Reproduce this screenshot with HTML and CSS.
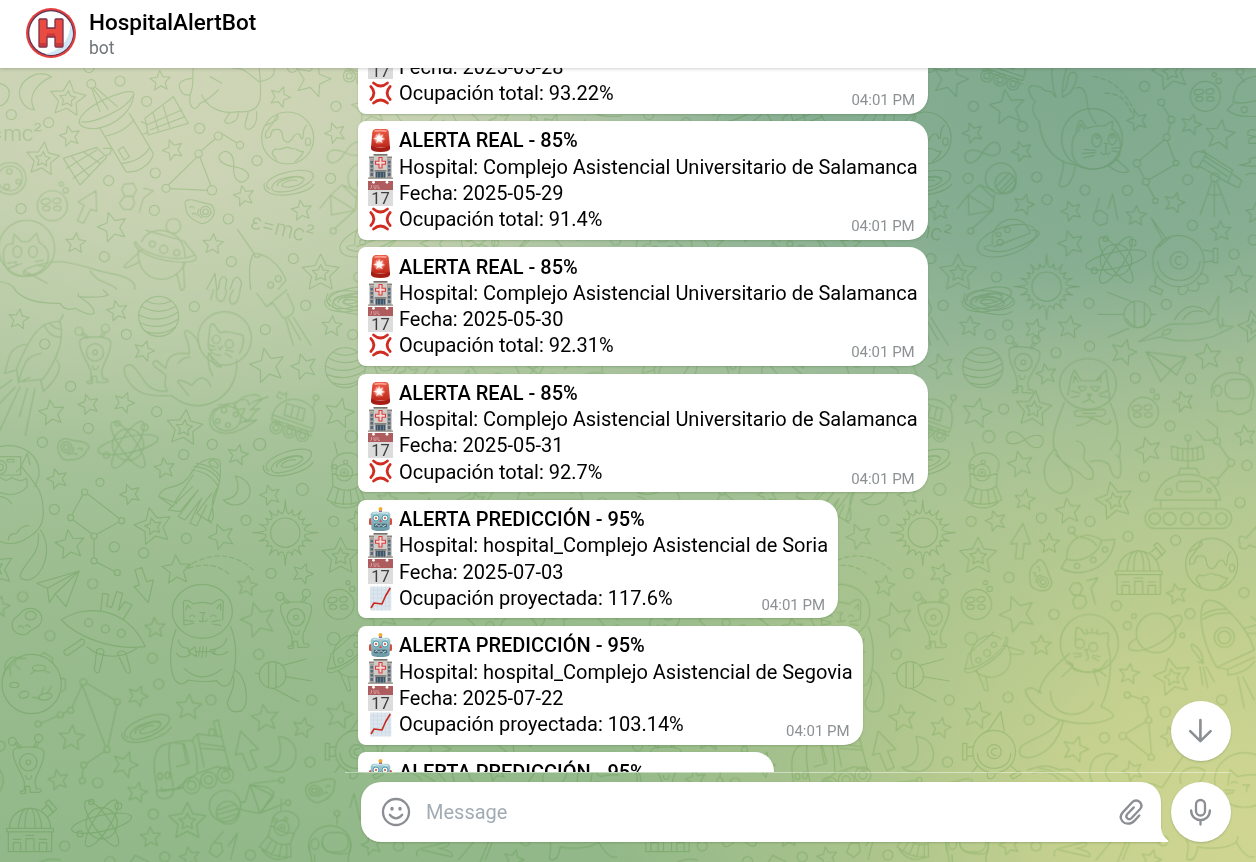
FILE: index.html
```html
<!DOCTYPE html>
<html lang="es">
<head>
<meta charset="utf-8">
<title>HospitalAlertBot</title>
<link rel="stylesheet" href="styles.css">
</head>
<body>
<svg class="defs" width="0" height="0" aria-hidden="true">
  <defs>
    <linearGradient id="redG" x1="0" y1="0" x2="0" y2="1"><stop offset="0" stop-color="#ec5a45"/><stop offset="1" stop-color="#bd281c"/></linearGradient>
    <radialGradient id="glow"><stop offset="0" stop-color="#fff"/><stop offset=".5" stop-color="#ffc9bd" stop-opacity=".8"/><stop offset="1" stop-color="#f0604a" stop-opacity="0"/></radialGradient>
    <linearGradient id="botG" x1="0" y1="0" x2="0" y2="1"><stop offset="0" stop-color="#a9cfd6"/><stop offset="1" stop-color="#6897a3"/></linearGradient>
    <symbol id="siren" viewBox="0 0 25 25">
      <path d="M3 19.500L4.300 4Q4.700 1.300 7.500 1H18Q20.300 1.100 20.700 3.500L22 19.500Z" fill="url(#redG)"/>
      <path d="M3 18Q12.500 21.500 22 18V21Q21 24 12.500 24T3 21Z" fill="#a51d15"/>
      <path d="M6 2.500Q12 1 19 2.500L18 4Q12 3 7 4Z" fill="#f9a08e"/>
      <circle cx="11" cy="10.500" r="6.500" fill="url(#glow)"/>
      <path d="M11 4L12 8.500L15.500 6L13.500 9.800L17.500 11L13 12L15 15.500L11 13L8 15.500L9.300 11.800L5 10.500L9.300 9.200L8 6L10.300 8.500Z" fill="#fff" opacity=".85"/>
    </symbol>
    <symbol id="hospital" viewBox="0 0 25 25">
      <path d="M1 2.500H24V4.500H1Z" fill="#8a857f"/><path d="M1.500 4.500H7V24H1.500ZM18 4.500H23.500V24H18Z" fill="#a5a19c"/>
      <path d="M6 1H19V24H6Z" fill="#cfccc8"/><path d="M5.500 0H19.500V1.600H5.500Z" fill="#77736d"/>
      <path d="M2.500 7H5V9.500H2.500ZM2.500 11H5V13.500H2.500ZM2.500 15H5V17.500H2.500ZM2.500 19H5V22H2.500ZM20 7H22.500V9.500H20ZM20 11H22.500V13.500H20ZM20 15H22.500V17.500H20ZM20 19H22.500V22H20Z" fill="#536b80"/>
      <path d="M7.500 17.500H17.500V24H7.500Z" fill="#3f5668"/><path d="M12.500 18.500V24M9.500 18.500V24M15.500 18.500V24" stroke="#8799a6" stroke-width=".6"/>
      <path d="M6.500 16H18.500V17.600H6.500Z" fill="#86817a"/>
      <path d="M11 3.500H14V7.200H17.500V10.200H14V14H11V10.200H7.500V7.200H11Z" fill="#f1dcd9" stroke="#db3d3c" stroke-width="1.100"/>
      <path d="M0 23.500H25V24.800H0Z" fill="#918e89"/>
    </symbol>
    <symbol id="calendar" viewBox="0 0 25 25">
      <path d="M0 0H25V25H0Z" fill="#dcdcdd"/><path d="M0 0H25V9H0Z" fill="#ae5c5d"/>
      <path d="M3.500 4V7Q2.500 8 1.800 7M6 4V7.300H8V4M10 4V7.300H12" stroke="#dca9a9" fill="none" stroke-width=".8"/>
      <circle cx="5.500" cy="1.300" r="1.400" fill="#fff"/><circle cx="19" cy="1.300" r="1.400" fill="#fff"/>
      <text x="12.500" y="22.700" text-anchor="middle" class="cal-day">17</text>
    </symbol>
    <symbol id="anger" viewBox="0 0 25 25">
      <path d="M5.500 2Q12.500 8 19.500 2M5.500 22Q12.500 16 19.500 22M2.800 5.500Q9 12 2.800 18.500M22.200 5.500Q16 12 22.200 18.500" fill="none" stroke="#d02c21" stroke-width="2.700" stroke-linecap="round"/>
    </symbol>
    <symbol id="robot" viewBox="0 0 25 25">
      <path d="M11 3H14V6H11Z" fill="#7853a0"/><circle cx="12.500" cy="2" r="2" fill="#f3ad34"/>
      <rect x="1" y="11" width="4" height="7" rx="1.500" fill="#d84d3d"/><rect x="20" y="11" width="4" height="7" rx="1.500" fill="#d84d3d"/>
      <path d="M2.600 8Q3 5 6 4.800H19Q22 5 22.400 8L21.500 22Q20 24 12.500 24T3.500 22Z" fill="url(#botG)"/>
      <path d="M5 6.500Q12 4.500 20 6.500" stroke="#d7edf0" fill="none"/>
      <circle cx="8" cy="11" r="3" fill="#f5f5ec" stroke="#4a9eb4" stroke-width="1"/><circle cx="17" cy="11" r="3" fill="#f5f5ec" stroke="#4a9eb4" stroke-width="1"/>
      <circle cx="8" cy="11" r="1" fill="#c14b40"/><circle cx="17" cy="11" r="1" fill="#c14b40"/>
      <path d="M12.500 12L14 15H11Z" fill="#d7524b"/>
      <rect x="6" y="16.800" width="13" height="3.400" rx="1.200" fill="#406574"/><path d="M7 18.500L9 17.500L11 19.500L13 17.500L15 19.500L18 18" fill="none" stroke="#e8f1f1" stroke-width=".9"/>
    </symbol>
    <symbol id="chart" viewBox="0 0 25 25">
      <path d="M2 .5H23.300V24.500H2Z" fill="#dde6ee"/>
      <path d="M5.500 .5V24.500M9.500 .5V24.500M13.500 .5V24.500M17.500 .5V24.500M21 .5V24.500M2 4H23M2 8H23M2 12H23M2 16H23M2 20H23" stroke="#cbd7e2" stroke-width=".6"/>
      <path d="M3 22L6 17L14 18L17.500 10L22.300 2" fill="none" stroke="#c9291f" stroke-width="1.600" stroke-linejoin="round"/>
    </symbol>

    <g id="alien"><path d="M-46-30C-48-45-20-46 0-46C25-46 46-42 47-30C48 10 22 30 20 60L24 80H36Q44 90 30 90H6L4 72H-8L-8 92Q-24 98-24 88L-12 84L-12 60C-14 40-48 0-46-30ZM-25-42L-40-55M-19-45L-36-60M15-45L24-62M22-45L32-60M-8 40Q-6 54 4 51Q10 48 10 40"/><circle r="26"/><circle r="7"/><circle cx="-48" cy="-63" r="12"/><circle cx="31" cy="-72" r="12"/></g>
    <g id="ball"><circle r="60"/><path d="M-52-30Q0 0 52-30M-60-5Q0 25 58-12M-56 20Q5 45 60 8M-40 45Q10 62 50 32M-38-46Q0-28 38-46"/></g>
    <g id="moon"><circle r="45"/><ellipse cx="-17" cy="-16" rx="14" ry="8" transform="rotate(-10)"/><ellipse cx="16" cy="-12" rx="12" ry="8" transform="rotate(-10)"/><ellipse cx="-18" cy="8" rx="11" ry="7"/><ellipse cx="15" cy="8" rx="11" ry="7"/><circle cx="40" cy="-46" r="8"/><circle cx="27" cy="-65" r="6"/></g>
    <g id="galaxy"><path d="M-60 20C-100-10 20-52 65-32C95-12 20 34-40 27C-62 22-55 0-20-12C20-24 55-20 42-4C25 14-18 18-22 8C-20-2 10-12 22-6M-75 2C-82 30-45 42 0 36C40 30 65 18 74 5M-35 10C-45-4 25-26 40-12"/></g>
    <g id="atom"><circle r="47"/><ellipse rx="92" ry="24" transform="rotate(-12)"/><ellipse rx="82" ry="24" transform="rotate(55)"/><ellipse rx="82" ry="24" transform="rotate(-57)"/><circle cx="-31" cy="-64" r="8"/><circle cx="50" cy="-52" r="10"/><circle cx="-65" cy="32" r="9"/></g>
    <g id="earth"><circle r="78"/><path d="M-66-38C-40-50-20-55-32-70M-32-70C-50-20-70-30-66 0C-40 0-58-20-40-25C-10-30-20-10-12 5C0 22 12 8 18-5C30-20 38-10 40 0C52 12 40-30 58-38M-34 68C-35 50-60 50-36 32C-18 42-10 18 12 32C30 28 30 45 48 40C38 65 30 60 22 72"/><ellipse cx="61" cy="11" rx="8" ry="11"/></g>
    <g id="infinity"><path d="M0 0C-30-34-55-20-55 0S-30 22 0 0S55-22 55 0S30 34 0 0Z"/></g>
    <g id="dome"><path d="M-70 5H70V16H-70ZM-65 16V75H65V16M-62 5C-58-75 58-75 62 5M-35 5C-30-50-15-56 0-56C15-56 30-50 35 5M-15 5C-15-40-8-54 0-56C8-54 15-40 15 5M-50 75V48H-28V75M-12 75V36H12V75M28 75V48H50V75M-12 26H12M-50 38H-28M28 38H50M35-50L52-65L70-44L52-28M46-72L56-80L80-54L70-42Z"/></g>
    <g id="pod"><path d="M-40-15C-60-90 75-90 42-15M-38 28L-40-10Q0 8 42-10L40 28M-38 28C-10 45 20 45 40 28M-38 28L-56 70Q0 95 56 70L40 28M-22 38L-32 80M-4 42L-8 84M14 42L18 84M30 36L42 78M-44 78Q0 110 44 78M-25-68L-34-104"/><circle cy="-12" cx="-4" r="25"/><circle cx="-4" cy="-12" r="11"/><circle cx="-4" cy="-12" r="3"/><circle cx="-33" cy="-30" r="6"/><circle cy="-44" r="6"/></g>
    <g id="saucer"><path d="M-70-35C-50-90 60-80 60 10M-88-35C-105-20-50 18 30 25C80 30 105 22 90 5L60-32M-88-35C-70 5 40 30 90 5M-80-12C-90 85 20 110 60 30M-70-10L-120 35Q-130 45-110 42L-75 25M35 60L48 110Q62 110 58 90L55 28M-58-70C-10-55 35-45 60-35"/><circle cx="25" cy="-82" r="22"/><circle cx="-38" cy="-28" r="9"/><circle cx="-4" cy="-12" r="12"/><circle cx="35" cy="-2" r="9"/></g>
    <g id="blob"><path d="M-40-18C-50-40-20-38 0-30C20-22 40-30 46-5C48 20 20 40 5 35C-20 25-42 10-40-18ZM-28-12Q-20-20-14-10M-20 8Q-14 0-8 10M0-8Q-10 8 8 18"/><circle cx="20" r="16"/><circle cx="20" r="8"/></g>
    <g id="helmet"><path d="M-60 20C-75-70 60-80 66 0C68 25 50 40 60 55Q20 85 0 60Q-20 65-42 60L-44 32M24-58V-82"/><rect x="-20" y="-34" width="78" height="58" rx="25"/><ellipse cx="-42" rx="12" ry="16"/><circle cx="24" cy="-92" r="8"/></g>
    <g id="probe"><circle r="46"/><circle cx="14" cy="14" r="31"/><path d="M-5 38L37-6M-15 25L25-15M5 42L42 5M-20 36L-64 20L-98 50L-96 110L-24 96L-20 50M-98 50L-24 96M-64 20L-20 60M-98 50L-130 90M-25 96L-85 150"/><circle cx="-90" cy="158" r="9"/></g>
    <g id="rover"><path d="M-65 12C-58-45 10-70 58-20C68 0 66 30 55 52L-65 12ZM-65 20L55 62M-60 0L55 40M-20-35L35-18L28 18L-28 0ZM0-29L-8 7M18-24L10 13M-35-48L-50-55L-42-70L-30-60L-20-68L-22-50M58-20L66-42"/><circle cx="68" cy="-52" r="8"/><circle cx="-52" cy="38" r="18"/><circle cx="-52" cy="38" r="9"/><circle cx="-12" cy="50" r="18"/><circle cx="-12" cy="50" r="9"/><circle cx="27" cy="62" r="18"/><circle cx="27" cy="62" r="9"/></g>
    <g id="bird"><circle r="40"/><path d="M-12-38L-12 38M10-38L10 38M-52-5H-40M28-28L100-48M38 5L118 18M2 40L78 80"/></g>
    <g id="pod2"><circle r="64"/><circle r="21"/><path d="M8-10Q-10-10-8 4Q-4 12 5 11M-50 5C-50 65 50 65 50 5M-34-54L-16-66L20-120L30-62M-64-15L-82-12L-82 15L-62 12M-82-25H-94V25H-82ZM-50 42L-66 62M50 42L70 60M-20 62V78Q-2 88 4 66M48 72L76 58L80 68L56 82Z"/></g>

    <g id="tile">
      <g id="p0" transform="scale(.3333)">
        <path d="M155 230C110 205 60 240 58 280C62 310 80 328 103 329C80 290 110 250 155 230ZM0 250Q30 260 28 280Q25 310 0 318"/>
        <text x="-65" y="424" class="formula">ɛ=mc²</text><text x="748" y="684" class="formula" transform="rotate(14 748 684)">ɛ=mc²</text>
        <path d="M238 370C230 325 380 260 402 278C400 330 350 375 290 386Q245 388 238 370ZM244 366C280 370 380 330 400 285M275 264L300 335M286 262L352 320M280 265L325 328M300 385L378 515C410 520 455 495 460 460L388 340M318 408Q370 400 402 360M365 490Q420 485 448 445M355 450L370 440L388 470L373 480ZM190 475L290 442L320 472L240 555ZM435 355L520 290L565 370L445 405ZM310 445L335 445L330 462L318 466M424 365L440 372L442 398L430 402M215 470L268 528M250 455L300 490M200 505L290 450M220 535L310 470M460 340L475 392M490 318L510 385M440 375L545 330M450 390L555 350"/>
        <circle cx="274" cy="252" r="13"/>
        <path d="M580 205C575 240 585 250 570 285Q545 290 538 260Q535 240 575 235M570 285C565 330 590 335 600 310Q625 300 655 270M605 285C630 340 690 340 715 335Q770 340 780 300Q785 270 777 200M665 250Q640 235 630 230M715 335C720 370 670 380 675 360L690 338M770 335C775 390 735 400 735 375L745 335M700 205C740 200 760 240 780 245Q830 235 822 205"/>
        <use href="#earth" x="863" y="414"/>
        <path d="M664 400L709 428M646 416L604 452M590 472L505 555M510 566L622 571M600 472L633 558M647 416L604 452"/><circle cx="655" cy="408" r="12"/><circle cx="720" cy="435" r="11"/><circle cx="596" cy="461" r="11"/><circle cx="498" cy="565" r="12"/><circle cx="636" cy="571" r="14"/>
        <use href="#infinity" transform="translate(701 500) rotate(45)"/><use href="#infinity" transform="translate(1035 458) rotate(-22)"/>
        <use href="#galaxy" x="868" y="548"/><use href="#moon" x="157" y="617"/>
        <path d="M288 572L234 606L252 616L232 662L250 670L272 628L290 634ZM372 552L400 550L410 570L400 588H374L365 570ZM374 588L398 590L404 610L394 628H370L358 610ZM430 564L460 572L430 595L418 636"/>
        <use href="#blob" x="597" y="635"/><ellipse cx="30" cy="535" rx="48" ry="48"/><ellipse cx="30" cy="535" rx="37" ry="37"/><circle cx="28" cy="514" r="8"/><circle cx="55" cy="545" r="7"/><circle cx="20" cy="560" r="8"/>
        <circle cx="80" cy="745" r="84"/><path d="M12 785C5 740 20 730 38 732L42 702L65 725H85L110 700L118 728C160 750 150 800 110 820C60 840 20 825 12 785ZM22 790L50 785M25 805L52 795M105 785L130 780M108 795L132 798M45 790Q55 798 65 790"/><ellipse cx="52" cy="755" rx="13" ry="17"/><ellipse cx="99" cy="755" rx="13" ry="17"/>
        <path d="M72 812C85 800 140 785 180 785C240 790 280 810 330 820C390 830 410 850 404 868M75 815L90 822M72 812Q65 830 90 822L142 850M270 812C290 850 340 850 350 868M0 845Q35 850 45 868"/>
        <use href="#saucer" x="495" y="760"/>
        <path d="M712 688L762 760M752 868C745 810 750 775 762 760C800 760 840 795 858 840L835 868M762 762Q765 780 785 765M620 868L645 820L650 868M655 868L660 840Q670 820 680 840L675 868M690 868L700 840Q715 820 725 850L720 868"/><circle cx="835" cy="836" r="9"/><circle cx="812" cy="855" r="9"/>
        <use href="#probe" x="1090" y="535"/><use href="#rover" x="1100" y="190"/>
        <ellipse cx="1108" cy="722" rx="92" ry="42" transform="rotate(-18 1108 722)"/><path d="M1065 735C1055 650 1160 630 1178 700L1070 740M1065 735C1000 740 1080 770 1130 745C1200 720 1230 690 1180 690"/><circle cx="1083" cy="703" r="7"/><circle cx="1110" cy="690" r="8"/><circle cx="1088" cy="727" r="9"/><use href="#galaxy" transform="translate(1055 905) rotate(20)"/>
      </g>
      <g id="p1" transform="translate(0 290) scale(.3333)">
        <path d="M45 0Q80 42 180 40Q195 65 225 55Q270 80 282 70Q285 50 240 22M235 10V20Q300 25 325 15L310 0"/>
        <use href="#ball" x="476" y="79"/><use href="#ball" x="1036" y="233"/><use href="#alien" x="285" y="187"/>
        <path d="M190 74L178 95C120 90 90 140 50 235L55 275L128 268C170 210 195 150 180 95M135 110Q150 145 184 140M148 98Q160 115 182 118M78 163C20 170 25 220 14 250L50 240M124 190C80 195 70 220 55 278L90 262M170 210C190 230 170 270 130 304L122 270M35 270L-20 310M45 292L-20 360M60 290L0 420M82 295L58 380M105 295L76 436"/>
        <circle cx="674" cy="145" r="80"/><path d="M624 165C630 130 625 100 640 101L660 128Q680 122 705 130L728 135C735 155 725 180 718 190M624 170Q640 200 662 195M630 188Q640 235 665 230M662 228L625 190Q620 220 638 258M568 192C570 150 540 120 562 122Q595 140 600 175M568 192Q500 180 498 235L470 212Q450 215 465 230L498 256Q490 290 503 303C430 310 430 250 395 225Q365 220 375 255C410 330 470 315 515 317C600 390 720 320 710 210M535 220Q550 200 570 202M565 316L533 275Q535 262 575 286Q610 240 633 290M655 170L660 180L668 168M625 165L645 170M628 180L648 178M678 180L700 185M676 190L695 202"/><circle cx="649" cy="148" r="12"/><circle cx="688" cy="162" r="12"/>
        <path d="M655 345L700 340L712 360L735 355L725 380L740 390L720 400M700 355C720 310 770 310 780 320M700 340C730 320 750 330 745 345C770 325 780 330 804 320C770 330 770 350 750 360L780 355C750 370 760 390 735 395L770 390C740 410 710 430 680 430C625 430 620 390 640 360Q660 350 685 345"/><ellipse cx="680" cy="385" rx="42" ry="37"/><circle cx="672" cy="360" r="8"/><circle cx="707" cy="373" r="7"/><circle cx="653" cy="393" r="7"/><circle cx="684" cy="405" r="7"/>
        <path d="M770 10L800 50L860 0M800 48L820 40L850 85Q880 80 882 55L862 10M856 85L880 166M865 85L902 150M880 82L932 165M632 30L640 0M650 0Q645 30 662 35Q675 35 680 0M700 0Q680 30 695 42Q715 45 720 0"/>
        <use href="#galaxy" x="1050" y="28"/><use href="#rover" x="880" y="375"/><use href="#atom" x="384" y="464"/><use href="#galaxy" transform="translate(865 518) rotate(-5)"/>
        <use href="#blob" transform="translate(217 480) scale(-1 1) rotate(-25)"/>
        <path d="M0 470C70 455 125 500 116 560L105 590M0 500H62V555H0M22 508H42V516H22ZM65 525L82 490L90 525M50 545L65 530C110 590 130 600 130 670Q130 720 80 745Q45 770 0 755M0 562Q20 580 35 562Q60 580 80 565L82 590Q50 625 0 608M0 620Q20 620 35 642M25 750Q25 730 50 730Q65 705 86 707M122 720C160 780 130 860 85 870Q50 870 65 845C90 800 120 790 115 730"/><circle cx="0" cy="532" r="20"/><circle cx="0" cy="532" r="10"/>
        <path d="M575 548C600 500 655 500 660 515Q665 550 655 590L625 690M575 548C540 610 490 575 476 620L530 640M625 690Q640 700 640 675Q630 620 655 590M575 540Q630 545 655 590M582 530Q640 535 658 575M590 520Q640 525 660 560M627 515L640 510Q658 520 652 535L630 525ZM580 555L525 635M578 590L505 660L540 665L595 600L535 680L555 690L605 625L570 700L590 708L620 645M635 610L590 670L635 700M476 620L520 650"/>
        <path d="M706 558C770 570 760 645 705 645Q685 645 670 630C710 625 725 600 706 558Z"/>
        <use href="#pod" x="1037" y="560"/>
        <path d="M247 617L217 672M264 613L356 684M220 690L273 730M292 732L355 697M282 750V802M292 818L342 843"/><circle cx="254" cy="606" r="9"/><circle cx="212" cy="683" r="9"/><circle cx="365" cy="692" r="9"/><circle cx="282" cy="738" r="9"/><circle cx="282" cy="813" r="9"/><circle cx="352" cy="848" r="9"/>
        <g class="sun" transform="translate(856 728)"></g>
        <path class="dash" d="M558 832Q670 760 760 840M565 835Q640 810 688 853"/>
        <path d="M110 880L238 843L198 950L165 912L148 938L142 895ZM142 895L238 843L165 912M405 840L425 832L440 875L460 870L445 938L402 890L418 885Z"/>
        <use href="#infinity" transform="translate(1162 449) rotate(5)"/>
      </g>
      <g id="p2" transform="translate(0 570) scale(.3333)">
        <path d="M38 175C30 140 60 140 65 125C90 105 130 120 125 150C120 175 100 170 80 192Q50 200 38 175ZM55 172Q62 160 70 174M76 168Q84 160 90 172"/><ellipse cx="92" cy="137" rx="16" ry="13"/>
        <path d="M184 150C260 100 380 110 436 230C350 240 240 210 184 150ZM260 230C310 270 370 265 410 235M302 122L308 70L326 74L320 108L335 112L350 65L368 70L355 122L375 95L396 105L370 148M245 208L192 242Q190 258 205 255L252 222Q258 205 240 208M290 240L283 300Q290 315 298 305L312 245Q310 230 290 240M352 250L378 305Q390 315 392 305L378 250Q365 235 352 250"/><circle cx="266" cy="158" r="12"/><circle cx="316" cy="177" r="12"/><circle cx="364" cy="190" r="12"/>
        <ellipse cx="607" cy="124" rx="90" ry="81"/><path d="M552 165L550 95Q560 85 580 102Q610 92 635 102Q660 80 670 95L668 150M558 120L562 105L572 115M650 115L662 102V120M570 140Q576 130 584 140M632 140Q640 130 648 140M600 128H615L608 136V150M598 152Q604 160 610 152Q616 158 622 150M553 150L580 155M553 165L580 160M636 155L662 150M638 162L662 166M528 178C500 250 510 340 545 342Q555 340 565 330Q610 338 650 332Q670 360 690 340C715 290 710 210 692 170M535 210Q540 235 565 235L570 255Q540 270 530 250M680 205Q675 230 650 235M683 245Q660 262 635 250M552 295Q605 345 666 297M565 245L585 230L590 260L565 245M590 245H635M600 230L596 258M610 230L606 262M620 232L618 260M630 240L650 236L640 246L650 254ZM705 300C740 320 750 400 725 422Q690 435 682 400C685 380 705 360 702 320"/>
        <use href="#alien" x="888" y="142"/><use href="#alien" x="85" y="577"/><use href="#moon" x="1017" y="103"/><use href="#bird" x="818" y="315"/>
        <g transform="translate(1050 260)"><use href="#saucer" transform="scale(-.85 .85) rotate(25)"/></g>
        <circle cx="95" cy="342" r="89"/><ellipse cx="43" cy="345" rx="13" ry="8"/><ellipse cx="72" cy="374" rx="15" ry="10" transform="rotate(-15 72 374)"/><ellipse cx="117" cy="294" rx="20" ry="9"/><ellipse cx="136" cy="380" rx="20" ry="10" transform="rotate(-12 136 380)"/><path d="M15 300C10 270 40 255 50 265Q45 285 15 300L12 315M30 295L32 318M45 285L60 298M50 265H78M122 256L132 247L158 265V278M182 324L196 328V358L184 364M105 302L92 312M132 302L150 308M125 370L130 352M140 370L155 350M118 384L98 382"/>
        <path d="M246 346L216 412M261 340L344 390M247 346L316 528M351 406L324 528M202 424L190 430M172 438L125 459M312 545L260 580M249 595L247 622"/><circle cx="250" cy="336" r="10"/><circle cx="352" cy="395" r="9"/><circle cx="212" cy="421" r="9"/><circle cx="181" cy="434" r="9"/><circle cx="114" cy="462" r="9"/><circle cx="321" cy="539" r="9"/><circle cx="251" cy="585" r="9"/><circle cx="247" cy="632" r="9"/>
        <use href="#galaxy" transform="translate(440 476) rotate(-8)"/>
        <path d="M470 650C460 600 455 540 490 525Q540 510 575 512Q590 520 592 610L530 655L470 662ZM510 520Q500 560 520 650M525 520H552L568 580L530 590M548 520L560 580M575 512L592 492L665 500L690 600L650 590L592 610M592 492L612 590M598 520L670 530M605 535L672 540M625 495L630 476L642 478L645 498M652 497L640 455L655 450L665 500M470 655Q465 690 500 685Q520 680 520 660L550 650M484 652V664L545 655"/><ellipse cx="480" cy="619" rx="7" ry="10"/><ellipse cx="502" cy="616" rx="7" ry="10"/><circle cx="575" cy="646" r="25"/><circle cx="575" cy="646" r="13"/><circle cx="626" cy="630" r="24"/><circle cx="626" cy="630" r="12"/><circle cx="676" cy="615" r="24"/><circle cx="676" cy="615" r="12"/>
        <path d="M722 483L706 555L726 550L748 602L770 592L750 543L775 538ZM835 500C900 500 905 590 850 604Q815 610 793 592C840 590 850 550 835 500Z"/>
        <use href="#dome" x="90" y="770"/><use href="#atom" x="305" y="760"/><use href="#pod2" x="1070" y="545"/>
        <g transform="translate(675 708)"><circle r="47"/><circle cx="8" cy="20" r="34"/><path d="M-22 12L30-5M-22 25L40 8M-15 40L42 22M48-12H60L75-65L130-55L147-40L105 22L65 15L48 10M75-65L105 22M75-65L147-30L105 22M85-68L160-77M108 20L180-8"/><circle cx="170" cy="-78" r="8"/><circle cx="189" cy="-10" r="8"/></g>
        <g transform="translate(845 785) rotate(18)"><use href="#pod" transform="scale(.9)"/></g><use href="#helmet" x="987" y="822"/><use href="#blob" transform="translate(963 662) scale(-1 1)"/>
        <path d="M670 785L635 825L628 848L650 862L668 845L664 820L642 818M684 828L712 790L692 868M1050 712L1062 670L1080 750M0 600Q20 630 0 665M120 876Q150 862 180 870M390 880L405 856L445 875"/>
      </g>
      <g id="p3" transform="translate(288.5 60) scale(.3333)">
        <path d="M390 112L375 95Q355 95 345 82Q310 70 308 88Q312 110 328 125C310 150 330 175 340 185C345 260 390 310 450 315M378 20C375 70 385 95 390 112M423 20Q405 80 410 112L430 100Q455 70 452 42Q430 25 425 60Q422 90 410 95M450 85Q480 70 485 140Q495 175 510 192M412 302C415 340 398 360 400 378Q425 390 442 345L448 317M570 295C585 315 610 325 608 335Q580 345 545 315"/><circle cx="498" cy="237" r="91"/><path d="M438 270C438 235 445 225 450 220Q455 185 465 180L482 205Q510 195 535 198Q560 180 560 185L558 208C590 225 590 280 570 300C530 340 440 340 438 270ZM458 215L464 192L475 208M535 250H545L540 256V280Q530 290 526 276M540 280Q548 288 552 276M475 268L510 272M468 280L508 278M472 294L505 286M558 265L585 262M558 272L582 278"/><ellipse cx="512" cy="241" rx="14" ry="20"/><ellipse cx="559" cy="237" rx="12" ry="17"/><circle cx="514" cy="230" r="5"/><circle cx="559" cy="229" r="5"/>
        <path class="dash" d="M502 50Q580 60 624 150M537 100Q590 95 618 160"/>
        <path d="M710 138L730 170M734 190L725 222M714 240L640 302M724 243L746 300M636 320L655 355M743 316L668 360M664 375L685 413"/><circle cx="706" cy="127" r="10"/><circle cx="736" cy="179" r="10"/><circle cx="722" cy="232" r="10"/><circle cx="633" cy="310" r="11"/><circle cx="750" cy="309" r="8"/><circle cx="660" cy="365" r="10"/><circle cx="688" cy="423" r="8"/>
        <use href="#moon" x="838" y="109"/>
        <path d="M922 125C925 75 950 50 1000 48M922 125Q940 135 990 122M922 130L904 150Q930 175 1000 168M942 48L955 65"/><circle cx="942" cy="34" r="11"/><circle cx="955" cy="149" r="9"/>
        <path d="M800 320C785 300 800 270 826 276L840 280L920 330L905 368L820 318L815 322ZM826 276L832 270L842 280L815 325M840 290L915 338M835 302L905 350M920 342L948 362L938 384L900 365M865 365V470M858 363L823 463M872 363L910 463M848 402Q865 410 884 402"/><circle cx="867" cy="352" r="13"/>
        <path d="M520 415L508 458M522 450L545 465L542 490L520 497L503 482L504 460ZM546 445L560 402L575 480M990 210Q960 205 966 225L990 230Q960 235 970 250H995M990 292Q960 295 975 305Q955 315 940 315Q965 320 990 318M960 345Q975 335 990 342"/>
        <use href="#atom" x="570" y="600"/><g class="sun" transform="translate(362 680)"></g>
        <circle cx="757" cy="603" r="77"/><circle cx="759" cy="601" r="26"/><path d="M765 590Q745 588 748 605Q752 618 765 612M695 603C700 680 820 680 822 603M692 565L710 540L676 474L720 535M700 560L735 530M832 570L862 575V602L832 608M862 565H875V608H862ZM690 650L686 680L710 690L705 704L670 690L674 678L690 680M760 680Q750 710 775 702Q790 690 785 680M790 690Q815 700 820 680L815 665M822 642Q850 640 845 665Q835 675 820 670"/>
        <circle cx="634" cy="763" r="40"/><path d="M625 725V800M655 730V800M545 697L620 726M516 763H595M675 763H690M745 780Q770 735 810 740Q840 745 850 765L878 708L875 780M770 780Q790 745 830 755"/>
      </g>
      <g id="p4" transform="translate(288.5 320) scale(.3333)">
        <use href="#alien" transform="translate(292 127) rotate(6)"/>
        <path d="M600 -5Q620 25 640 22Q660 20 672 0M545 52L608 25M638 65L705 50Q770 75 860 50L922 20L885 15M638 65L715 20Q730 10 750 12Q830 15 870 -5M708 45Q710 25 735 28Q735 45 708 45M875 0Q880 20 885 25M890 -5V20"/>
        <path d="M660 95L780 112L752 165L735 150L704 184ZM660 95L733 148L780 112M660 95L752 165"/>
        <ellipse cx="486" cy="192" rx="85" ry="76"/><path d="M425 225L436 170L445 150L465 182H510L540 150L552 240M442 188L446 168L456 185M516 182L524 165V188M456 200H482M494 200H522M458 198Q465 225 480 205M496 203Q510 225 520 200M484 222H497L490 232ZM490 232V238L470 248M490 238L505 248M462 220L436 212M460 228L436 232M520 222L545 212M520 228L545 232M415 248C390 310 375 350 385 390C340 430 345 500 400 520C450 520 445 470 425 440Q400 420 388 388M552 248C575 300 580 330 570 360L552 390M450 362Q485 370 472 412C480 440 510 440 500 475Q480 485 460 458Q410 430 388 402M492 425Q530 415 550 435Q560 480 580 472Q590 450 580 410C585 380 585 370 572 360M570 405L582 415M447 285Q440 270 460 272L535 268Q545 280 530 288L490 290Q440 290 447 285ZM470 280H510M452 316Q475 318 500 295L535 312Q550 315 554 302M482 290L505 298"/>
        <use href="#moon" x="652" y="277"/><use href="#helmet" x="917" y="212"/>
        <path d="M843 300L874 323V350M812 333L835 360H862M880 375L908 415M908 440L878 474M736 378Q785 395 828 378L834 415Q785 430 738 416ZM755 384V420M770 386V422M785 388V422M800 386V422M815 382V419M786 363V386M786 422V442M758 462L762 445H810L820 462M686 540C700 480 740 463 785 463C840 463 870 490 884 540ZM704 540V562M870 540V562M850 475Q880 465 878 490L865 500"/><rect x="657" y="566" width="260" height="59" rx="29"/><rect x="752" y="484" width="75" height="31" rx="12"/><circle cx="786" cy="353" r="9"/><circle cx="873" cy="363" r="10"/><circle cx="915" cy="428" r="11"/><circle cx="728" cy="516" r="10"/><circle cx="849" cy="511" r="6"/><circle cx="686" cy="596" r="17"/><circle cx="731" cy="596" r="19"/><circle cx="783" cy="596" r="19"/><circle cx="836" cy="596" r="19"/><circle cx="886" cy="596" r="17"/>
        <path d="M1000 610L960 655Q940 640 938 660Q945 670 940 680Q960 695 970 675L1000 685M291 610L253 672L273 670L268 716H290L294 670L313 672ZM422 718C420 660 470 625 527 660C520 700 470 730 422 718ZM422 715L405 745C470 780 560 740 566 658L527 662M440 638L452 650M465 652Q500 655 512 678"/><circle cx="437" cy="630" r="10"/><circle cx="453" cy="738" r="8"/><circle cx="502" cy="720" r="8"/><circle cx="537" cy="689" r="8"/>
        <use href="#dome" x="638" y="748"/><use href="#earth" x="857" y="733"/><use href="#blob" transform="translate(340 770) rotate(55)"/>
      </g>
      <g id="p5" transform="translate(288.5 570) scale(.3333)">
        <path d="M440 40L460 38L470 55L460 75H442L430 58ZM450 75L475 78L482 98L470 115H448L440 95ZM482 32L515 24L495 55L508 103"/>
        <circle cx="490" cy="220" r="87"/><path d="M448 215L450 175Q460 165 475 192Q500 185 520 192L545 188Q550 200 545 225C560 270 555 350 525 410C570 430 565 440 555 445C500 470 440 460 402 450C350 435 300 390 298 360Q315 345 340 368C345 320 390 290 430 250M345 370L340 360M430 275L445 300L470 305Q510 310 530 290L545 270M407 320L440 290Q445 275 420 280M517 346L502 300Q505 290 540 318M374 364C370 450 480 450 502 395M412 450C400 520 350 560 305 563Q270 560 285 530C310 505 370 500 402 450M485 190L482 178M498 188V176M510 190L516 178M475 240L485 238L480 248Q495 265 480 272M442 250L466 252M445 262L466 258M500 256L522 260M498 262L518 272"/><circle cx="461" cy="221" r="14"/><circle cx="502" cy="231" r="13"/>
        <circle cx="690" cy="189" r="59"/><path d="M730 145C770 125 775 145 760 165C720 220 650 250 615 240C600 235 610 215 632 205"/>
        <path d="M872 292C835 230 815 150 830 105C840 80 880 90 905 120C940 155 970 190 985 240L872 292ZM830 135Q860 115 900 118M830 148Q870 125 912 130M872 292L905 298L985 262M905 298L906 315Q960 310 985 275M832 280L800 240Q790 215 805 225Q830 240 832 280L815 275M822 290L830 345M832 290L845 355M840 290L865 335M935 320L955 415M950 320L985 390M955 175L990 165M965 190L990 190M975 140L990 150"/><circle cx="895" cy="202" r="30"/><circle cx="895" cy="202" r="19"/>
        <path d="M614 377L648 388M660 402L667 440M658 456L599 491M669 463L676 551M600 502L667 556"/><circle cx="604" cy="375" r="9"/><circle cx="658" cy="390" r="10"/><circle cx="668" cy="451" r="9"/><circle cx="590" cy="498" r="11"/><circle cx="676" cy="562" r="9"/>
        <path d="M575 558Q540 540 505 565Q480 600 500 640M575 558C530 580 530 620 560 640M305 600C360 580 380 590 400 600C440 590 450 610 470 632M320 610Q370 595 400 630M340 595Q390 600 440 635M770 560L710 650C700 660 680 625 650 650M765 640C750 600 800 580 835 600Q840 620 800 660"/>
        <ellipse cx="956" cy="630" rx="90" ry="82"/><path d="M905 645L912 600L935 620Q960 612 990 615M916 640Q925 630 935 640M950 645H970L962 655V665M895 660L925 662M898 672L922 668"/>
        <path d="M780 810C800 830 770 870 790 870Q810 870 815 830Q850 840 900 830Q940 820 935 800M930 815Q960 870 985 860M385 858Q380 840 400 835L480 815Q490 830 450 835Q500 845 490 860Q440 850 400 840M600 815L575 876M610 820L590 870M555 815L510 870M100 820Q110 860 180 850Q190 830 185 815M60 820L70 876"/>
      </g>
    </g>
  </defs>
</svg>

<main class="app">
  <svg class="wallpaper" viewBox="0 0 1256 862" aria-hidden="true">
    <use href="#tile" x="-637.5"/><use href="#tile"/><use href="#tile" x="637.5"/>
  </svg>
  <header class="topbar">
    <svg class="avatar" viewBox="0 0 50 50">
      <defs><clipPath id="disc"><circle cx="25" cy="25" r="22"/></clipPath></defs>
      <circle cx="25" cy="25" r="25" fill="#e23f3d"/><circle cx="25" cy="25" r="22.900" fill="#5d3658"/><circle cx="25" cy="25" r="21.700" fill="#fff"/>
      <path d="M44 12Q46 40 16 47L30 50L50 40Z" fill="#d2e7f6" clip-path="url(#disc)"/>
      <path d="M14 11H20Q21 11 21 12V20H29V12Q29 11 30 11H36Q37 11 37 12V38Q37 39 36 39H30Q29 39 29 38V29H21V38Q21 39 20 39H14Q13 39 13 38V12Q13 11 14 11Z" fill="#ea4b40" stroke="#7b3049" stroke-width="1.300"/>
      <path d="M14 35H20V38.300H14ZM30 35H36V38.300H30ZM21 25.500H29V28.300H21Z" fill="#c9383a"/>
    </svg>
    <div class="peer"><h1 class="peer-name">HospitalAlertBot</h1><p class="peer-status">bot</p></div>
  </header>

  <section class="messages">
    <article class="bubble continued">
      <p class="line"><svg><use href="#calendar"/></svg>Fecha: 2025-05-28</p>
      <p class="line"><svg><use href="#anger"/></svg>Ocupación total: 93.22%<time>04:01 PM</time></p>
    </article>
    <article class="bubble">
      <p class="line title"><svg><use href="#siren"/></svg>ALERTA REAL - 85%</p>
      <p class="line"><svg><use href="#hospital"/></svg>Hospital: Complejo Asistencial Universitario de Salamanca</p>
      <p class="line"><svg><use href="#calendar"/></svg>Fecha: 2025-05-29</p>
      <p class="line"><svg><use href="#anger"/></svg>Ocupación total: 91.4%<time>04:01 PM</time></p>
    </article>
    <article class="bubble">
      <p class="line title"><svg><use href="#siren"/></svg>ALERTA REAL - 85%</p>
      <p class="line"><svg><use href="#hospital"/></svg>Hospital: Complejo Asistencial Universitario de Salamanca</p>
      <p class="line"><svg><use href="#calendar"/></svg>Fecha: 2025-05-30</p>
      <p class="line"><svg><use href="#anger"/></svg>Ocupación total: 92.31%<time>04:01 PM</time></p>
    </article>
    <article class="bubble">
      <p class="line title"><svg><use href="#siren"/></svg>ALERTA REAL - 85%</p>
      <p class="line"><svg><use href="#hospital"/></svg>Hospital: Complejo Asistencial Universitario de Salamanca</p>
      <p class="line"><svg><use href="#calendar"/></svg>Fecha: 2025-05-31</p>
      <p class="line"><svg><use href="#anger"/></svg>Ocupación total: 92.7%<time>04:01 PM</time></p>
    </article>
    <article class="bubble">
      <p class="line title"><svg><use href="#robot"/></svg>ALERTA PREDICCIÓN - 95%</p>
      <p class="line"><svg><use href="#hospital"/></svg>Hospital: hospital_Complejo Asistencial de Soria</p>
      <p class="line"><svg><use href="#calendar"/></svg>Fecha: 2025-07-03</p>
      <p class="line"><svg><use href="#chart"/></svg>Ocupación proyectada: 117.6%<time>04:01 PM</time></p>
    </article>
    <article class="bubble">
      <p class="line title"><svg><use href="#robot"/></svg>ALERTA PREDICCIÓN - 95%</p>
      <p class="line"><svg><use href="#hospital"/></svg>Hospital: hospital_Complejo Asistencial de Segovia</p>
      <p class="line"><svg><use href="#calendar"/></svg>Fecha: 2025-07-22</p>
      <p class="line"><svg><use href="#chart"/></svg>Ocupación proyectada: 103.14%<time>04:01 PM</time></p>
    </article>
    <article class="bubble cut">
      <p class="line title"><svg><use href="#robot"/></svg>ALERTA PREDICCIÓN - 95%</p>
    </article>
  </section>

  <footer class="composer">
    <div class="field">
      <svg class="ico smile" viewBox="0 0 30 30"><circle cx="15" cy="15" r="13"/><path d="M8.800 17.800Q15 25 21.200 17.800"/><ellipse class="dot" cx="11" cy="11.800" rx="1.700" ry="2"/><ellipse class="dot" cx="19" cy="11.800" rx="1.700" ry="2"/></svg>
      <span class="placeholder">Message</span>
      <svg class="ico clip" viewBox="0 0 30 30"><path d="M23.300 18.500L18.600 23.600C14.800 27.700 9 27.500 6.500 24.400C4.300 21.700 4.300 18 7 15.100L16.200 5.300C18.500 2.900 21.800 3 23.900 5.100C26.100 7.400 25.700 10.300 23.700 12.500L15.600 21C14.200 22.400 12.300 22.400 11.200 21.300C10 20.100 10.200 18.300 11.400 17L17.800 10.400"/></svg>
      <svg class="tail" viewBox="0 0 8 20"><path d="M0 0V20H6.500Q8 19.500 7 18.500Q1 14 0 6Z" fill="#fff"/></svg>
    </div>
    <button class="round" aria-label="Voz"><svg class="ico" viewBox=".6 0 30 30"><rect x="10.600" y="3" width="9" height="15.500" rx="4.500"/><path d="M5.700 13.300C5.700 26.300 24.500 26.300 24.500 13.300M15.100 23V27.500"/></svg></button>
  </footer>
  <button class="round scroll-down" aria-label="Bajar"><svg class="ico" viewBox=".6 .4 30 30"><path d="M15 4.500V25.500M4.800 15.500L15 25.500L25.200 15.500"/></svg></button>
</main>
<script src="doodles.js"></script>
</body>
</html>
```

FILE: styles.css
```css
* { box-sizing: border-box; }
body { margin: 0; font-family: Roboto, "Liberation Sans", sans-serif; color: #000; }
h1, p { margin: 0; }
.defs { position: absolute; }
.app {
  position: relative;
  display: flex;
  flex-direction: column;
  width: 1256px;
  height: 862px;
  overflow: hidden;
  isolation: isolate;
  background:
    radial-gradient(ellipse 560px 400px at 14% 6%, #d0d6b7 0%, rgba(208, 214, 183, .8) 35%, rgba(208, 214, 183, 0) 100%),
    radial-gradient(ellipse 640px 560px at 99% 96%, #d0d691 0%, rgba(206, 213, 144, .85) 28%, rgba(200, 210, 145, .38) 65%, rgba(196, 208, 145, 0) 100%),
    radial-gradient(ellipse 700px 430px at 86% 10%, #7fa98e 0%, rgba(127, 169, 142, .85) 40%, rgba(130, 172, 143, 0) 100%),
    linear-gradient(180deg, #b8cbaa 0%, #adc69f 40%, #9abc8e 70%, #92b889 100%);
}
.wallpaper { position: absolute; inset: 0; z-index: -1; width: 1256px; height: 862px; mix-blend-mode: multiply; }
#tile { fill: none; stroke: #d9ecd3; stroke-width: 3.6; stroke-linecap: round; stroke-linejoin: round; }
#tile .dash { stroke-dasharray: 14 9; }
.formula { font: 300 66px Inter, sans-serif; fill: #d9ecd3; stroke: none; letter-spacing: -2px; }

.topbar { display: flex; flex: none; align-items: center; height: 68px; padding: 0 26px 2px; gap: 13px; background: #fff; box-shadow: 0 1px 3px rgba(60, 70, 60, .25); z-index: 1; }
.avatar { width: 50px; height: 50px; }
.peer { padding-top: 3px; }
.peer-name { font-size: 22.5px; line-height: 27px; font-weight: 500; }
.peer-status { font-size: 17.5px; line-height: 25px; color: #707579; }

.messages { display: flex; flex-direction: column; flex: none; align-items: flex-start; gap: 7.5px; height: 703.5px; padding-left: 358px; overflow: hidden; }
.bubble { flex: none; padding: 6.4px 10px 7.35px; background: #fff; border-radius: 8px 19px 19px 8px; box-shadow: 0 1px 2px rgba(70, 110, 60, .3); }
.continued { width: 570px; margin-top: -20.7px; }
.cut { width: 416px; height: 118.75px; }
.line { display: flex; align-items: center; gap: 6px; height: 26.25px; font-size: 20px; line-height: 26.25px; letter-spacing: -.012px; white-space: nowrap; }
.line svg { flex: none; width: 25px; height: 25px; }
.title { font-weight: 500; }
.line time { align-self: flex-end; margin: 0 3px -7px auto; font-size: 15px; color: #8d9194; }
.cal-day { font: 16.5px Roboto, sans-serif; fill: #3e3e40; }

.composer { display: flex; gap: 10px; flex: none; height: 90.5px; padding: 10.5px 25px 0 16px; margin-left: 345px; background: linear-gradient(rgba(255, 255, 255, .45), rgba(255, 255, 255, .45)) 0 0 / 886px 1px no-repeat; }
.field { position: relative; display: flex; align-items: center; width: 800px; height: 60px; padding: 0 15px 0 19.5px; background: #fff; border-radius: 20px 20px 0 20px; box-shadow: 0 1px 2px rgba(70, 100, 50, .3); }
.tail { position: absolute; right: -7.5px; bottom: 0; width: 8px; height: 20px; }
.placeholder { flex: 1; margin-left: 15.5px; font-size: 20px; color: #a2acb4; }
.ico { width: 30px; height: 30px; fill: none; stroke: #8b8e92; stroke-width: 2.3; stroke-linecap: round; stroke-linejoin: round; }
.ico .dot { fill: #8b8e92; stroke: none; }
.round { display: flex; flex: none; align-items: center; justify-content: center; width: 60px; height: 60px; padding: 0; border: 0; border-radius: 50%; background: #fff; box-shadow: 0 1px 2px rgba(70, 100, 50, .3); }
.scroll-down { position: absolute; right: 25px; top: 701px; }
.scroll-down .ico { stroke-width: 2.6; }
```

FILE: doodles.js
```js
// Scatter of stars, double stars and rings per wallpaper section: [x, y, radius].
const sections = [
  {
    stars: [[481,243],[840,291],[210,409],[519,450],[1006,399],[732,588],[905,632],[227,730],[639,733],[938,238,55],[338,682,46]],
    doubles: [[203,297,56],[128,478,52],[962,820,58]],
    rings: [[360,243],[440,304],[34,344],[146,368],[599,385],[1008,319],[771,482],[466,519],[326,542],[992,535],[63,626],[463,631],[685,657],[313,770],[694,785],[880,776],[267,203],[877,202]]
  },
  {
    stars: [[56,88],[352,63],[432,183],[996,109],[155,369,40],[266,344],[372,338],[713,495],[494,535],[172,567],[391,613],[811,616],[912,230,40],[803,228,54],[1018,370,46],[210,765,46],[665,740,40],[530,840,46],[908,851],[1075,693]],
    doubles: [[553,414,56],[460,710,58],[1022,800,58],[-15,835,58]],
    rings: [[583,50],[917,46],[379,133],[796,119],[1058,134],[212,289],[470,365],[265,415],[127,457],[551,494],[637,463],[779,463,18],[1054,440,18],[300,577,12],[163,658],[907,598,18],[738,691],[559,745],[343,771],[431,789],[1001,694],[813,850],[134,162]]
  },
  {
    stars: [[465,174],[741,48],[775,150,54],[413,378],[566,412,40],[795,445,42],[909,474],[1018,436,42],[215,505,40],[375,584,40],[175,630],[411,668],[452,802],[569,862],[-2,110]],
    doubles: [[562,755,58]],
    rings: [[278,41],[68,80],[150,197],[457,264],[476,342],[776,253],[633,390],[935,390],[930,576],[293,638],[194,828],[460,732],[494,861],[751,855],[0,528],[330,875]]
  },
  {
    stars: [[244,143,55],[288,274],[293,434],[436,453],[630,468],[634,182],[745,428],[795,194],[882,225,46],[885,514],[435,551,40],[938,662,44],[990,460]],
    doubles: [[735,35,58]],
    rings: [[289,199],[655,79],[332,351],[363,419],[477,390],[604,391],[785,359],[799,496],[924,582],[489,730],[721,733],[982,540],[211,651]]
  },
  {
    stars: [[326,27],[430,22,36],[361,163],[593,97,40],[847,111,40],[772,245],[667,391,40],[958,347],[283,433,40],[296,540],[427,574,40],[370,671]],
    doubles: [[323,268,56],[565,543,58],[985,20,50]],
    rings: [[245,15],[491,79],[390,98],[628,174],[794,176],[233,267],[732,318],[655,470],[963,436],[942,548],[346,594],[492,604],[606,649],[749,661],[249,772]]
  },
  {
    stars: [[275,132,56],[345,227],[609,312],[752,72],[448,538,40],[620,603],[735,500],[250,825],[675,870]],
    doubles: [[740,322,58]],
    rings: [[384,133],[571,107],[954,68],[604,167,12],[624,138,7],[769,196,7],[792,131],[246,382],[309,449],[535,503],[718,426],[887,390],[330,828],[711,812]]
  }
];

function polygon(x, y, outer, inner, points, turn) {
  let d = '';
  for (let i = 0; i < points * 2; i++) {
    const r = i % 2 ? inner : outer;
    const a = turn + Math.PI * i / points;
    d += (i ? 'L' : 'M') + (x + r * Math.sin(a)).toFixed(1) + ' ' + (y - r * Math.cos(a)).toFixed(1);
  }
  return d + 'Z';
}

sections.forEach((s, i) => {
  let d = '';
  s.stars.forEach(([x, y, r = 32]) => { d += polygon(x, y, r, r * .46, 5, ((x * 7 + y * 3) % 11 - 5) / 14); });
  s.doubles.forEach(([x, y, r]) => {
    const turn = (x % 5 - 2) / 9;
    d += polygon(x, y, r, r * .5, 5, turn) + polygon(x, y, r * .45, r * .22, 5, turn);
  });
  const rings = s.rings.map(([x, y, r = 15]) => `<circle cx="${x}" cy="${y}" r="${r}"/>`).join('');
  document.getElementById('p' + i).insertAdjacentHTML('beforeend', `<path d="${d}"/>${rings}`);
});

// Sun: a disc inside a ring of curved flames of uneven length.
document.querySelectorAll('.sun').forEach(sun => {
  const n = 20;
  let d = '';
  for (let i = 0; i < n; i++) {
    const p = (r, k) => { const a = Math.PI * 2 * k / n; return (r * Math.sin(a)).toFixed(1) + ' ' + (-r * Math.cos(a)).toFixed(1); };
    const tip = i % 5 === 0 ? 98 : i % 2 ? 72 : 82;
    d += (i ? '' : 'M' + p(58, -.5)) + 'Q' + p(60, i - .1) + ' ' + p(tip, i) + 'Q' + p(60, i + .1) + ' ' + p(58, i + .5);
  }
  sun.innerHTML = `<circle r="44"/><path d="${d}Z"/>`;
});
```
